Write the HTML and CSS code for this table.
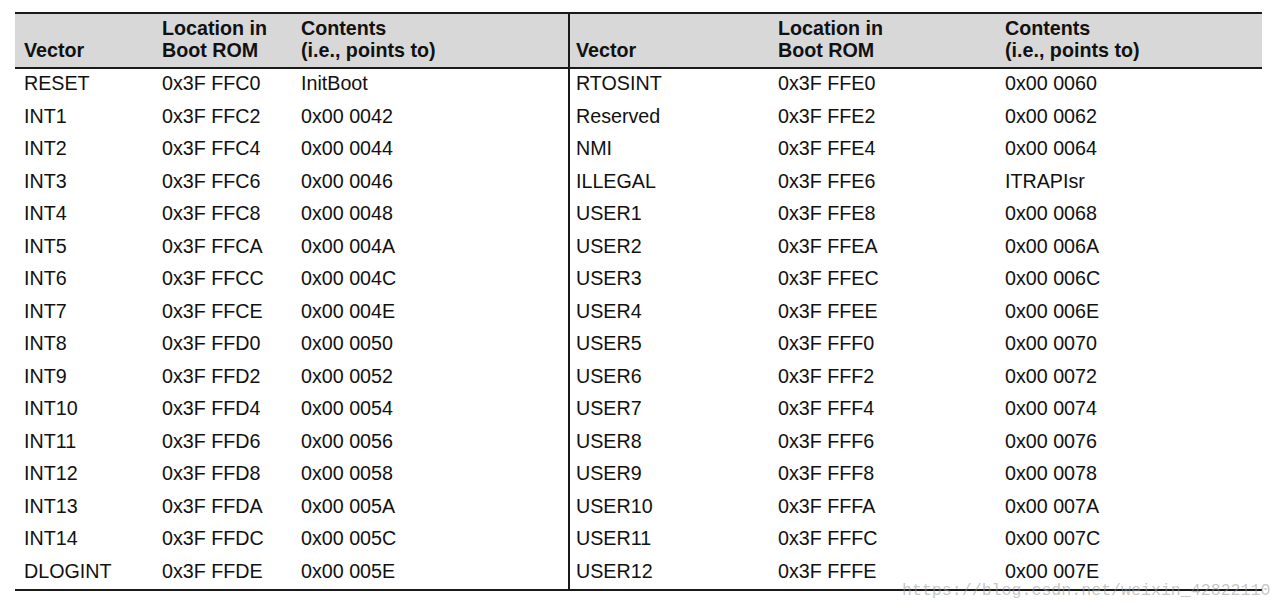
FILE: index.html
```html
<!DOCTYPE html>
<html lang="en">
<head>
<meta charset="utf-8">
<title>Boot ROM Vectors</title>
<link rel="stylesheet" href="styles.css">
</head>
<body>
<div class="page">
<table class="vt">
<colgroup>
<col class="c1"><col class="c2"><col class="c3"><col class="c4"><col class="c5"><col class="c6">
</colgroup>
<thead>
<tr>
<th class="pl">Vector</th><th>Location in<br>Boot ROM</th><th>Contents<br>(i.e., points to)</th>
<th class="div">Vector</th><th>Location in<br>Boot ROM</th><th>Contents<br>(i.e., points to)</th>
</tr>
</thead>
<tbody>
<tr><td class="pl">RESET</td><td>0x3F FFC0</td><td>InitBoot</td><td class="div">RTOSINT</td><td>0x3F FFE0</td><td>0x00 0060</td></tr>
<tr><td class="pl">INT1</td><td>0x3F FFC2</td><td>0x00 0042</td><td class="div">Reserved</td><td>0x3F FFE2</td><td>0x00 0062</td></tr>
<tr><td class="pl">INT2</td><td>0x3F FFC4</td><td>0x00 0044</td><td class="div">NMI</td><td>0x3F FFE4</td><td>0x00 0064</td></tr>
<tr><td class="pl">INT3</td><td>0x3F FFC6</td><td>0x00 0046</td><td class="div">ILLEGAL</td><td>0x3F FFE6</td><td>ITRAPIsr</td></tr>
<tr><td class="pl">INT4</td><td>0x3F FFC8</td><td>0x00 0048</td><td class="div">USER1</td><td>0x3F FFE8</td><td>0x00 0068</td></tr>
<tr><td class="pl">INT5</td><td>0x3F FFCA</td><td>0x00 004A</td><td class="div">USER2</td><td>0x3F FFEA</td><td>0x00 006A</td></tr>
<tr><td class="pl">INT6</td><td>0x3F FFCC</td><td>0x00 004C</td><td class="div">USER3</td><td>0x3F FFEC</td><td>0x00 006C</td></tr>
<tr><td class="pl">INT7</td><td>0x3F FFCE</td><td>0x00 004E</td><td class="div">USER4</td><td>0x3F FFEE</td><td>0x00 006E</td></tr>
<tr><td class="pl">INT8</td><td>0x3F FFD0</td><td>0x00 0050</td><td class="div">USER5</td><td>0x3F FFF0</td><td>0x00 0070</td></tr>
<tr><td class="pl">INT9</td><td>0x3F FFD2</td><td>0x00 0052</td><td class="div">USER6</td><td>0x3F FFF2</td><td>0x00 0072</td></tr>
<tr><td class="pl">INT10</td><td>0x3F FFD4</td><td>0x00 0054</td><td class="div">USER7</td><td>0x3F FFF4</td><td>0x00 0074</td></tr>
<tr><td class="pl">INT11</td><td>0x3F FFD6</td><td>0x00 0056</td><td class="div">USER8</td><td>0x3F FFF6</td><td>0x00 0076</td></tr>
<tr><td class="pl">INT12</td><td>0x3F FFD8</td><td>0x00 0058</td><td class="div">USER9</td><td>0x3F FFF8</td><td>0x00 0078</td></tr>
<tr><td class="pl">INT13</td><td>0x3F FFDA</td><td>0x00 005A</td><td class="div">USER10</td><td>0x3F FFFA</td><td>0x00 007A</td></tr>
<tr><td class="pl">INT14</td><td>0x3F FFDC</td><td>0x00 005C</td><td class="div">USER11</td><td>0x3F FFFC</td><td>0x00 007C</td></tr>
<tr><td class="pl">DLOGINT</td><td>0x3F FFDE</td><td>0x00 005E</td><td class="div">USER12</td><td>0x3F FFFE</td><td>0x00 007E</td></tr>
</tbody>
</table>
<div class="wm">https://blog.csdn.net/weixin_42822110</div>
</div>
</body>
</html>
```
FILE: styles.css
```css
html, body {
  margin: 0;
  padding: 0;
  background: #fff;
}
.page {
  position: relative;
  padding: 12px 0 0 15px;
  width: 1268px;
  height: 600px;
}
.vt {
  border-collapse: collapse;
  table-layout: fixed;
  width: 1247px;
  font-family: "Liberation Sans", Arial, sans-serif;
  font-size: 19.7px;
  color: #111;
}
.c1 { width: 147px; }
.c2 { width: 139px; }
.c3 { width: 268px; }
.c4 { width: 209px; }
.c5 { width: 227px; }
.c6 { width: 257px; }
.vt thead tr {
  background: #d8d8d8;
  border-top: 2px solid #1a1a1a;
  border-bottom: 2px solid #1a1a1a;
}
.vt th {
  height: 55px;
  box-sizing: border-box;
  padding: 0 0 6px 0;
  text-align: left;
  vertical-align: bottom;
  font-weight: bold;
  line-height: 22px;
}
.vt td {
  height: 32.5px;
  box-sizing: border-box;
  padding: 2px 0 6.5px 0;
  line-height: 24px;
  vertical-align: top;
  white-space: nowrap;
}
.vt tbody tr:last-child {
  border-bottom: 2px solid #1a1a1a;
}
.vt .pl { padding-left: 9px; }
.vt .div {
  border-left: 2px solid #1a1a1a;
  padding-left: 6px;
}
.wm {
  position: absolute;
  left: 902px;
  top: 579px;
  font-family: "Liberation Mono", "DejaVu Sans Mono", monospace;
  font-size: 16.6px;
  line-height: 24px;
  color: rgba(150, 150, 150, 0.55);
  white-space: nowrap;
}
```
